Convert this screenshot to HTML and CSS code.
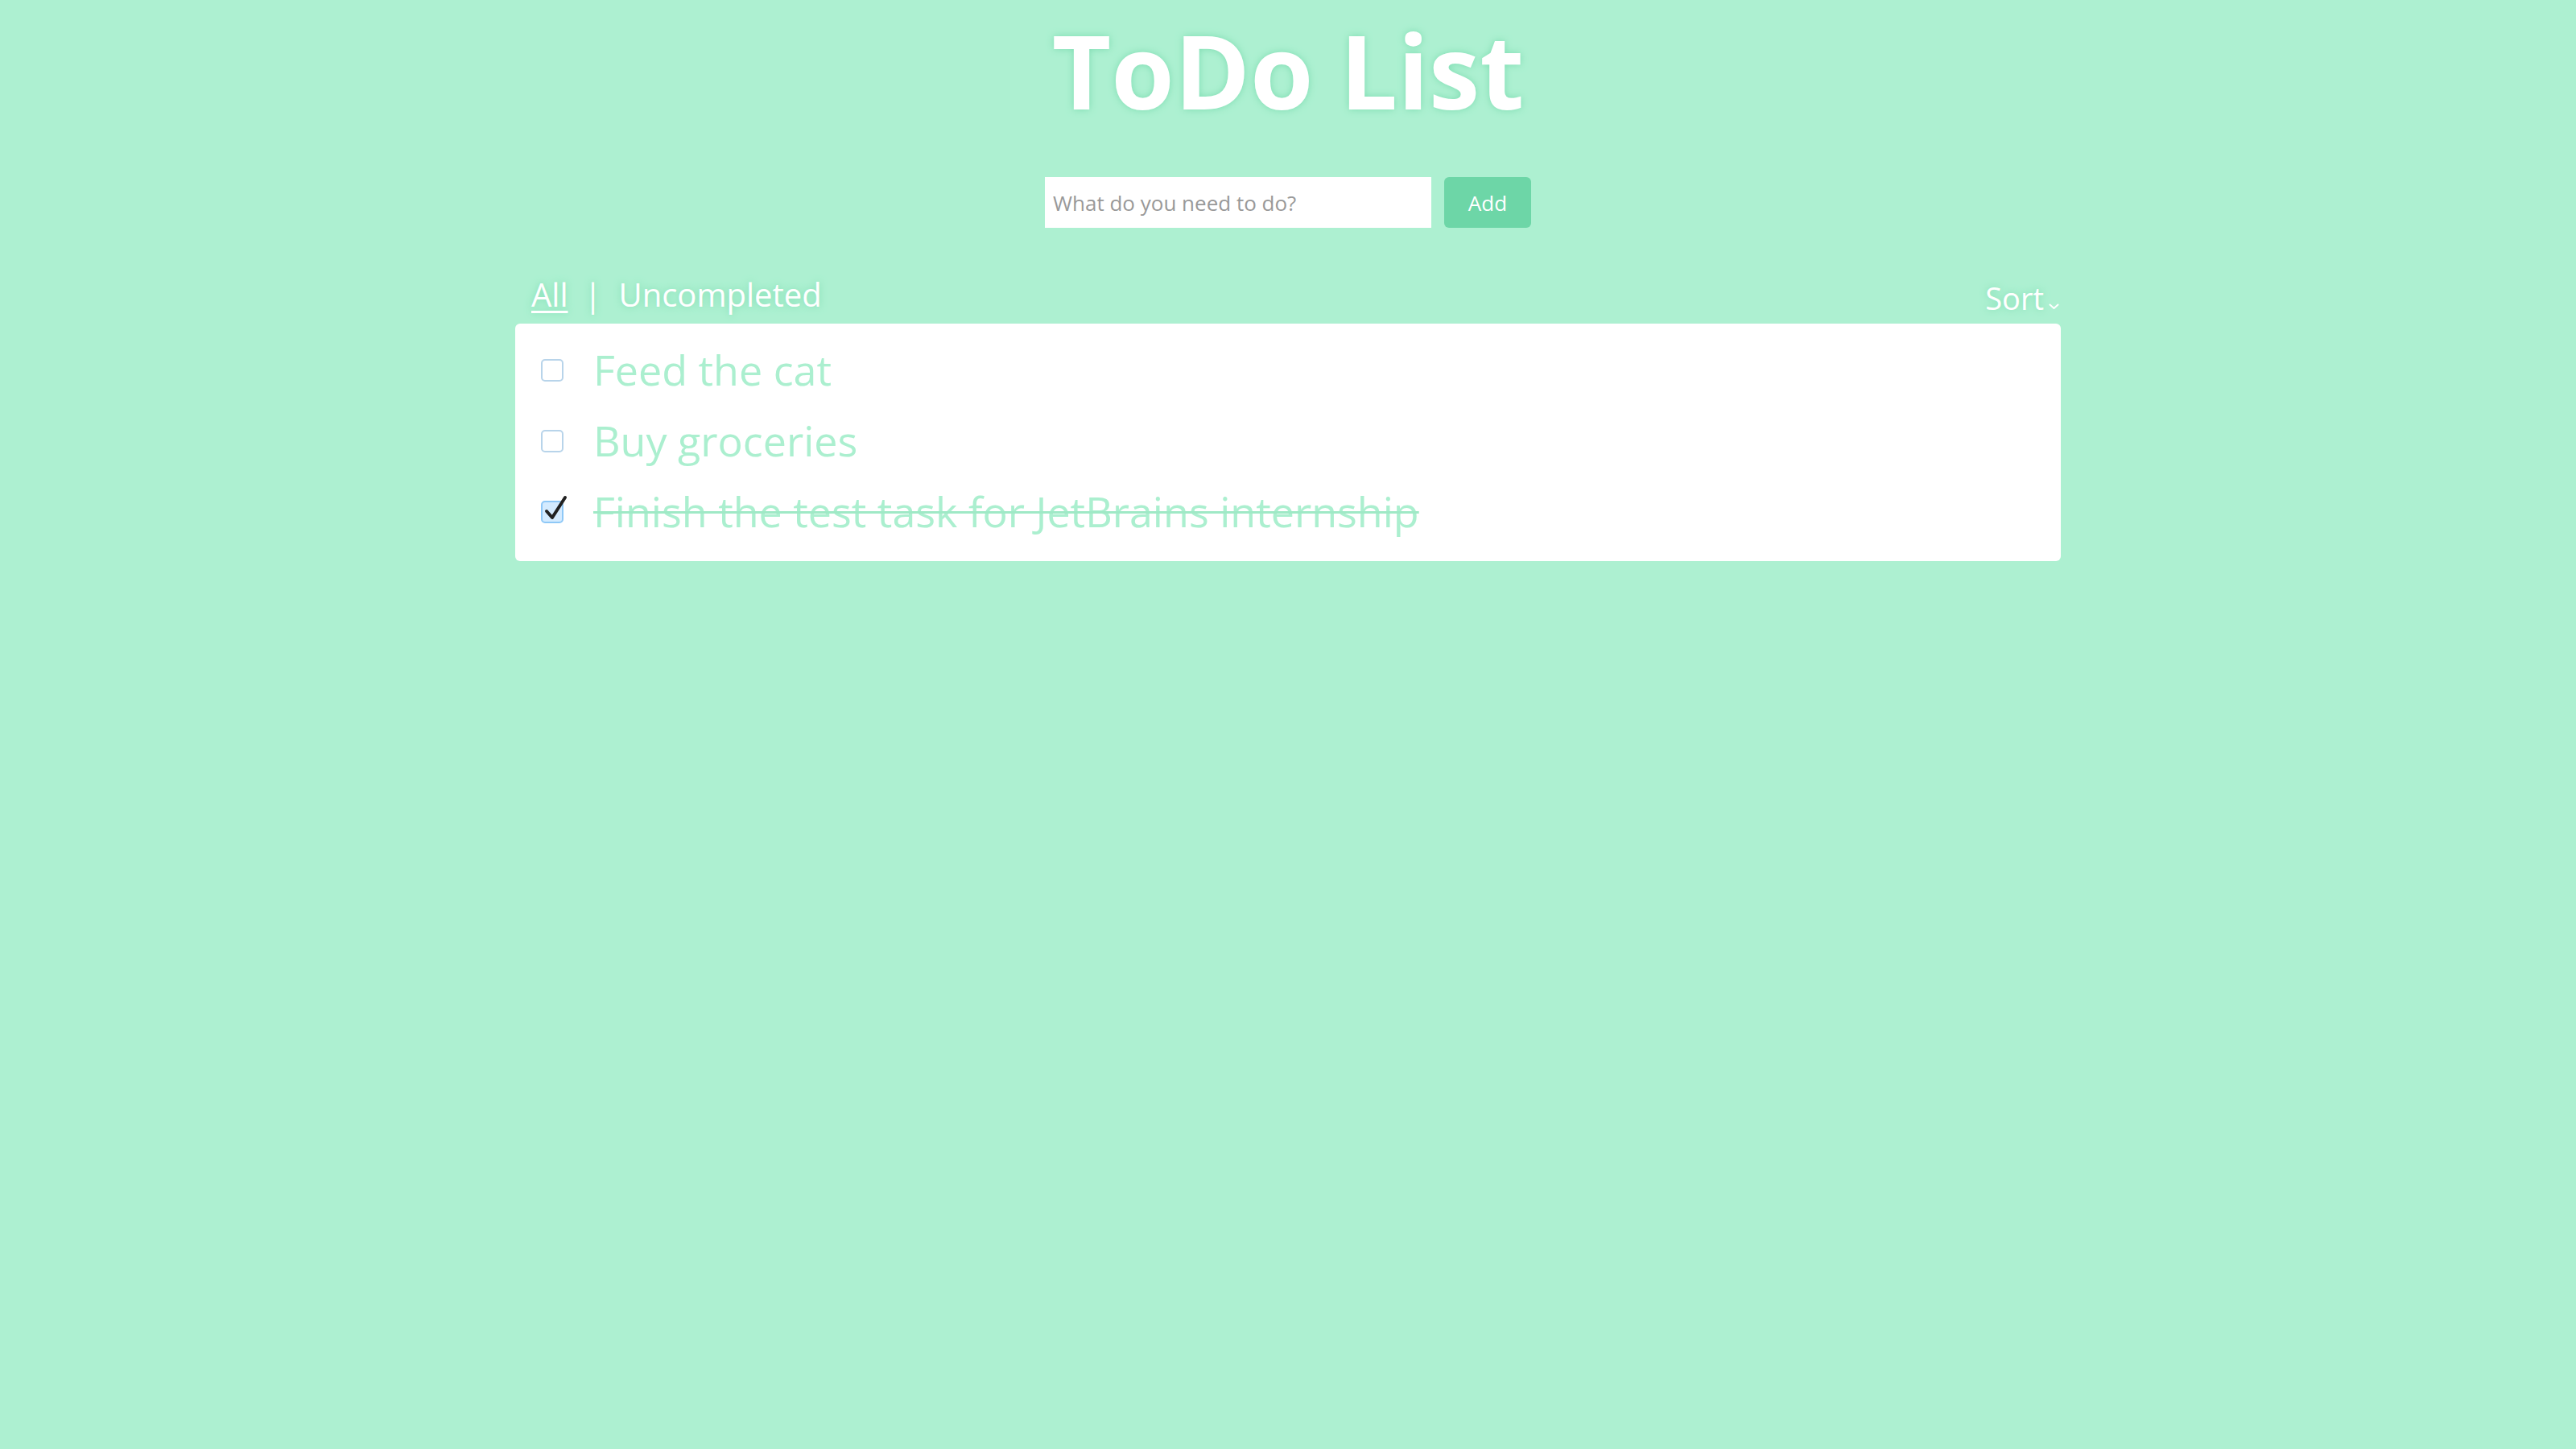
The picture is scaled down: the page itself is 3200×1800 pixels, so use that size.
FILE: index.html
```html
<!DOCTYPE html>
<html lang="en">
<head>
<meta charset="utf-8">
<title>ToDo List</title>
<link rel="stylesheet" href="styles.css">
</head>
<body>
<main class="app">
  <h1 class="title">ToDo List</h1>
  <form class="add-form">
    <input class="add-input" type="text" placeholder="What do you need to do?">
    <button class="add-btn" type="button">Add</button>
  </form>
  <section class="board">
    <div class="toolbar">
      <nav class="tabs">
        <a class="tab tab-active">All</a>
        <span class="tab-sep">|</span>
        <a class="tab">Uncompleted</a>
      </nav>
      <div class="sort">Sort<svg class="chevron" width="13" height="8" viewBox="0 0 13 8"><path d="M1.5 1.5 L6.5 6 L11.5 1.5" fill="none" stroke="#fff" stroke-width="2" stroke-linecap="round" stroke-linejoin="round"/></svg></div>
    </div>
    <ul class="list">
      <li class="item"><span class="check"></span><span class="item-text">Feed the cat</span></li>
      <li class="item"><span class="check"></span><span class="item-text">Buy groceries</span></li>
      <li class="item item-done"><span class="check check-on"><svg class="tick" width="34" height="36" viewBox="0 0 34 36"><path d="M5 21 L12 29 L28 4" fill="none" stroke="#222" stroke-width="4" stroke-linecap="round" stroke-linejoin="round"/></svg></span><span class="item-text">Finish the test task for JetBrains internship</span></li>
    </ul>
  </section>
</main>
</body>
</html>
```
FILE: styles.css
```css
html, body {
  margin: 0;
  padding: 0;
}
body {
  background: #adf0d1;
  font-family: "Open Sans", "Noto Sans", sans-serif;
  min-height: 1800px;
}
.app {
  display: flex;
  flex-direction: column;
  align-items: center;
}
.title {
  margin: 0;
  font-size: 127px;
  line-height: normal;
  font-weight: 700;
  color: #fff;
  text-shadow: 0 0 10px #7ddcb1;
}
.add-form {
  display: flex;
  gap: 16px;
  margin-top: 47px;
}
.add-input {
  width: 480px;
  height: 63px;
  box-sizing: border-box;
  border: none;
  outline: none;
  background: #fff;
  padding: 0 10px;
  font-family: inherit;
  font-size: 26px;
  color: #333;
}
.add-input::placeholder {
  color: #999;
}
.add-btn {
  width: 108px;
  height: 63px;
  border: none;
  border-radius: 6px;
  background: #6dd6a7;
  color: #fff;
  font-family: inherit;
  font-size: 26px;
  padding: 0;
}
.board {
  width: 1920px;
  margin-top: 58px;
}
.toolbar {
  display: flex;
  justify-content: space-between;
  align-items: flex-end;
  height: 61px;
}
.tabs {
  display: flex;
  align-items: baseline;
  padding: 0 0 7px 20px;
  font-size: 40px;
  line-height: 58px;
  color: #fff;
  text-shadow: 0 0 10px #7ddcb1;
}
.tab-active {
  text-decoration: underline;
  text-decoration-thickness: 3px;
  text-underline-offset: 5px;
}
.tab-sep {
  margin: 0 21px 0 20px;
}
.sort {
  display: flex;
  align-items: baseline;
  font-size: 38px;
  line-height: 54px;
  color: #fff;
  text-shadow: 0 0 10px #7ddcb1;
  padding: 0 2px 5px 0;
}
.chevron {
  margin-left: 6px;
}
.list {
  list-style: none;
  margin: 0;
  padding: 13px 32px 18px;
  background: #fff;
  border-radius: 6px;
}
.item {
  display: flex;
  align-items: center;
  height: 88px;
  gap: 37px;
}
.check {
  position: relative;
  flex: none;
  width: 28px;
  height: 28px;
  box-sizing: border-box;
  border: 2px solid #b8d4ea;
  border-radius: 5px;
  background: #fff;
  margin-top: 2px;
}
.check-on {
  background: #d4ebff;
  border-color: #8ec8f7;
}
.tick {
  position: absolute;
  left: 0;
  top: -10px;
}
.item-text {
  font-size: 52px;
  line-height: 88px;
  color: #abefcf;
}
.item-done .item-text {
  text-decoration: line-through;
  text-decoration-thickness: 3px;
  text-decoration-color: #9fe9c6;
}
```
